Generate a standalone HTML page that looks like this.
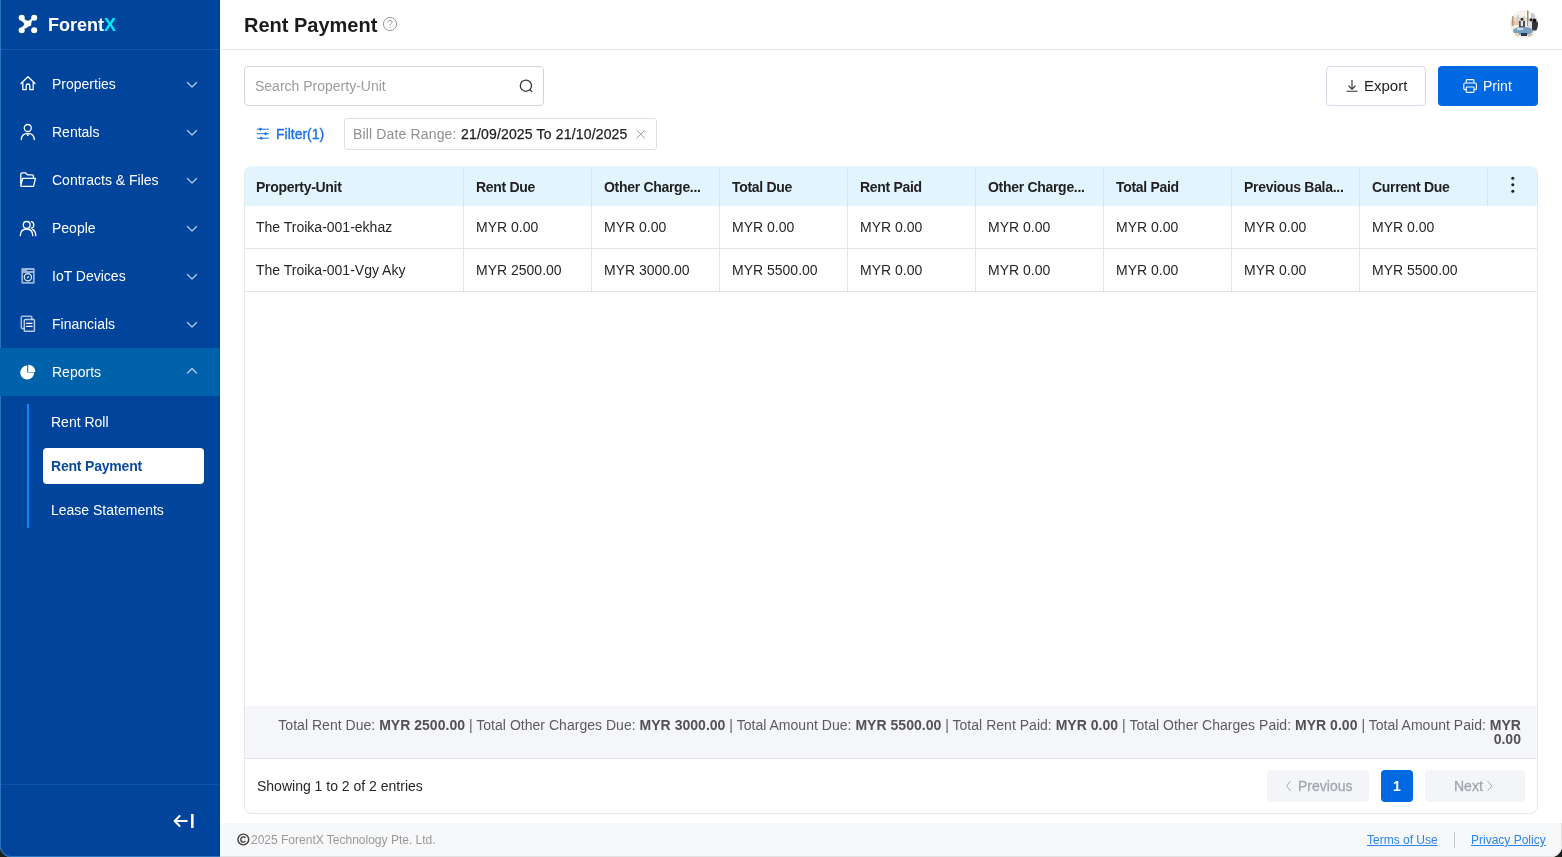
<!DOCTYPE html>
<html><head><meta charset="utf-8">
<style>
*{box-sizing:border-box;margin:0;padding:0}
html,body{width:1562px;height:857px;overflow:hidden;background:#18201a;font-family:"Liberation Sans",sans-serif}
#app{position:absolute;left:0;top:0;width:1562px;height:857px;background:#fff;border-radius:0 0 11px 11px;overflow:hidden}
.t{position:absolute;white-space:nowrap;font-size:14px;line-height:16px;will-change:transform}
#side{position:absolute;left:0;top:0;width:220px;height:857px;background:#00449c;color:#fff;overflow:hidden}
#side .lb{position:absolute;left:0;top:0;width:1px;height:857px;background:#2a74c0}
#side .bb{position:absolute;left:0;top:856px;width:220px;height:1px;background:#2a74c0}
#side .hline{position:absolute;left:0;top:49px;width:220px;height:1px;background:#0d5cae}
#side .bline{position:absolute;left:0;top:784px;width:220px;height:1px;background:#0a55a8}
#side .edge{position:absolute;left:219px;top:0;width:1px;height:857px;background:#003d94}
.logo{left:48px;top:16px;font-size:18px;line-height:18px;font-weight:bold;color:#fff}
.logo b{color:#00eaff}
.navt{left:52px;color:#fff}
.active{position:absolute;left:0;top:348px;width:220px;height:48px;background:#0061ab}
.sel{position:absolute;left:43px;top:448px;width:161px;height:36px;background:#fff;border-radius:4px}
.subline{position:absolute;left:27px;top:404px;width:2px;height:124px;background:#0a84ff}
#main{position:absolute;left:220px;top:0;width:1342px;height:857px}
.hdrline{position:absolute;left:220px;top:49px;width:1342px;height:1px;background:#e8e8e8}
.title{left:244px;top:15px;font-size:20px;line-height:20px;font-weight:bold;color:#1c1c1c}
.box{position:absolute}
.search{left:244px;top:66px;width:300px;height:40px;border:1px solid #d4d4d4;border-radius:4px}
.export{left:1326px;top:66px;width:100px;height:40px;border:1px solid #d6dce8;border-radius:4px}
.print{left:1438px;top:66px;width:100px;height:40px;background:#0069e2;border-radius:4px}
.chip{left:344px;top:118px;width:313px;height:32px;border:1px solid #e0e0e0;border-radius:3px}
.tbl{left:244px;top:166px;width:1294px;height:648px;border:1px solid #e9e9e9;border-top-color:#e2f4fd;border-radius:8px;overflow:hidden}
.thbg{position:absolute;left:0;top:0;width:1294px;height:39px;background:#e2f4fd}
.vl{position:absolute;width:1px;background:#e5e5e5}
.vlh{position:absolute;width:1px;background:#d6e6ee}
.hl{position:absolute;left:0;height:1px;width:1294px;background:#e5e5e5}
.totbg{position:absolute;left:0;top:539px;width:1294px;height:53px;background:#f5f6fa;border-bottom:1px solid #e6e6e6}
.totals{will-change:transform;letter-spacing:0.025px;position:absolute;left:0;top:551px;width:1292px;padding:0 16px 0 30px;text-align:right;font-size:14px;line-height:14px;color:#5c5c5c}
.totals b{color:#525252}
.th{font-weight:bold;color:#222;letter-spacing:-0.3px}
.td{color:#262626}
.pgbtn{position:absolute;top:770px;height:32px;border-radius:4px;background:#f4f5f9}
.one{position:absolute;left:1381px;top:770px;width:32px;height:32px;border-radius:4px;background:#0069e2}
.foot{position:absolute;left:220px;top:823px;width:1342px;height:34px;background:#f7f8fa;overflow:hidden}
.foot div{position:absolute;left:-40px;top:-40px;width:1382px;height:74px;border:1px solid #e2e2e2;border-radius:11px}
.ft{font-size:12px;line-height:14px}
a{color:#2a86e8;text-decoration:underline}
svg{position:absolute;left:0;top:0}
</style></head><body>
<div id="app">
<div id="side">
  <div class="hline"></div>
  <div class="bline"></div>
  <div class="edge"></div>
  <div style="position:absolute;left:0;top:-20px;width:260px;height:877px;border:1px solid #2a74c0;border-radius:11px"></div>
  <div class="active"></div>
  <div class="sel"></div>
  <div class="subline"></div>
</div>
<div class="t logo">Forent<b>X</b></div>
<div class="t navt" style="top:76px">Properties</div>
<div class="t navt" style="top:124px">Rentals</div>
<div class="t navt" style="top:172px">Contracts &amp; Files</div>
<div class="t navt" style="top:220px">People</div>
<div class="t navt" style="top:268px">IoT Devices</div>
<div class="t navt" style="top:316px">Financials</div>
<div class="t navt" style="top:364px">Reports</div>
<div class="t navt" style="left:51px;top:414px">Rent Roll</div>
<div class="t navt" style="left:51px;top:458px;color:#0b4a9c;font-weight:bold;letter-spacing:-0.2px">Rent Payment</div>
<div class="t navt" style="left:51px;top:502px">Lease Statements</div>

<div class="hdrline"></div>
<div class="t title">Rent Payment</div>
<div class="box search"></div>
<div class="t" style="left:255px;top:78px;color:#9b9b9b">Search Property-Unit</div>
<div class="box export"></div>
<div class="t" style="left:1364px;top:78px;color:#1f1f1f;font-size:15px">Export</div>
<div class="box print"></div>
<div class="t" style="left:1483px;top:78px;color:#fff;font-size:14px">Print</div>
<div class="t" style="left:276px;top:126px;color:#1670e6;-webkit-text-stroke:0.35px #1670e6">Filter(1)</div>
<div class="box chip"></div>
<div class="t" style="left:353px;top:126px;color:#8f8f8f;letter-spacing:0.15px">Bill Date Range:</div>
<div class="t" style="left:461px;top:126px;color:#222;letter-spacing:0.17px;-webkit-text-stroke:0.25px #222">21/09/2025 To 21/10/2025</div>

<div class="box tbl">
  <div class="thbg"></div>
  <div class="vlh" style="left:218px;top:0;height:39px"></div>
  <div class="vlh" style="left:346px;top:0;height:39px"></div>
  <div class="vlh" style="left:474px;top:0;height:39px"></div>
  <div class="vlh" style="left:602px;top:0;height:39px"></div>
  <div class="vlh" style="left:730px;top:0;height:39px"></div>
  <div class="vlh" style="left:858px;top:0;height:39px"></div>
  <div class="vlh" style="left:986px;top:0;height:39px"></div>
  <div class="vlh" style="left:1114px;top:0;height:39px"></div>
  <div class="vlh" style="left:1242px;top:0;height:39px"></div>
  <div class="vl" style="left:218px;top:39px;height:86px"></div>
  <div class="vl" style="left:346px;top:39px;height:86px"></div>
  <div class="vl" style="left:474px;top:39px;height:86px"></div>
  <div class="vl" style="left:602px;top:39px;height:86px"></div>
  <div class="vl" style="left:730px;top:39px;height:86px"></div>
  <div class="vl" style="left:858px;top:39px;height:86px"></div>
  <div class="vl" style="left:986px;top:39px;height:86px"></div>
  <div class="vl" style="left:1114px;top:39px;height:86px"></div>
  <div class="hl" style="top:81px"></div>
  <div class="hl" style="top:124px"></div>
  <div class="totbg"></div>
</div>
<div class="t th" style="left:256px;top:179px">Property-Unit</div>
<div class="t th" style="left:476px;top:179px">Rent Due</div>
<div class="t th" style="left:604px;top:179px">Other Charge...</div>
<div class="t th" style="left:732px;top:179px">Total Due</div>
<div class="t th" style="left:860px;top:179px">Rent Paid</div>
<div class="t th" style="left:988px;top:179px">Other Charge...</div>
<div class="t th" style="left:1116px;top:179px">Total Paid</div>
<div class="t th" style="left:1244px;top:179px">Previous Bala...</div>
<div class="t th" style="left:1372px;top:179px">Current Due</div>

<div class="t td" style="left:256px;top:219px">The Troika-001-ekhaz</div>
<div class="t td" style="left:476px;top:219px">MYR 0.00</div>
<div class="t td" style="left:604px;top:219px">MYR 0.00</div>
<div class="t td" style="left:732px;top:219px">MYR 0.00</div>
<div class="t td" style="left:860px;top:219px">MYR 0.00</div>
<div class="t td" style="left:988px;top:219px">MYR 0.00</div>
<div class="t td" style="left:1116px;top:219px">MYR 0.00</div>
<div class="t td" style="left:1244px;top:219px">MYR 0.00</div>
<div class="t td" style="left:1372px;top:219px">MYR 0.00</div>

<div class="t td" style="left:256px;top:262px">The Troika-001-Vgy Aky</div>
<div class="t td" style="left:476px;top:262px">MYR 2500.00</div>
<div class="t td" style="left:604px;top:262px">MYR 3000.00</div>
<div class="t td" style="left:732px;top:262px">MYR 5500.00</div>
<div class="t td" style="left:860px;top:262px">MYR 0.00</div>
<div class="t td" style="left:988px;top:262px">MYR 0.00</div>
<div class="t td" style="left:1116px;top:262px">MYR 0.00</div>
<div class="t td" style="left:1244px;top:262px">MYR 0.00</div>
<div class="t td" style="left:1372px;top:262px">MYR 5500.00</div>

<div class="totals" style="left:245px;top:718px">Total Rent Due: <b>MYR 2500.00</b> | Total Other Charges Due: <b>MYR 3000.00</b> | Total Amount Due: <b>MYR 5500.00</b> | Total Rent Paid: <b>MYR 0.00</b> | Total Other Charges Paid: <b>MYR 0.00</b> | Total Amount Paid: <b>MYR 0.00</b></div>

<div class="t td" style="left:257px;top:778px">Showing 1 to 2 of 2 entries</div>
<div class="pgbtn" style="left:1267px;width:102px"></div>
<div class="one"></div>
<div class="pgbtn" style="left:1425px;width:100px"></div>
<div class="t" style="left:1298px;top:778px;color:#a3a7ad;-webkit-text-stroke:0.3px #a3a7ad">Previous</div>
<div class="t" style="left:1393px;top:778px;color:#fff;font-weight:bold">1</div>
<div class="t" style="left:1454px;top:778px;color:#a3a7ad;-webkit-text-stroke:0.3px #a3a7ad">Next</div>

<div class="foot"><div></div></div>
<div class="t ft" style="left:251px;top:833px;color:#999">2025 ForentX Technology Pte. Ltd.</div>
<div class="t ft" style="left:1367px;top:833px"><a>Terms of Use</a></div>
<div class="t ft" style="left:1471px;top:833px"><a>Privacy Policy</a></div>
<div class="box" style="left:1454px;top:832px;width:1px;height:16px;background:#c8c8c8"></div>

<svg width="1562" height="857" viewBox="0 0 1562 857">
  <!-- logo -->
  <g fill="#fff"><circle cx="21.7" cy="17.7" r="3.05"/><circle cx="34.2" cy="17.7" r="3.05"/><circle cx="21.7" cy="30.2" r="3.05"/><circle cx="34.2" cy="30.2" r="3.05"/>
  <path d="M20.8 20.4 L24.4 19 Q27.8 22.5 31.3 18.7 L32.5 20.3 Q30.9 22.6 31.2 25.4 Q28 26.4 25.2 28.8 L21.4 27.3 Q27.2 23.8 20.8 20.4 Z"/></g>
  <g fill="none" stroke="#fff" stroke-width="1.3" stroke-linejoin="round" stroke-linecap="round">
    <!-- home -->
    <path d="M21 83.5 L28 76.8 L35 83.5 M22.8 82 V89.6 H26.2 V85.6 Q26.2 84 28 84 Q29.8 84 29.8 85.6 V89.6 H33.2 V82"/>
    <!-- person -->
    <circle cx="27.8" cy="128" r="3.5"/>
    <path d="M21.3 139.6 Q21.6 133.3 27.8 133.3 Q34 133.3 34.3 139.6 M26.3 133.6 L27.8 135.2 L29.3 133.6"/>
    <!-- folder -->
    <path d="M20.8 185.5 V174 Q20.8 172.8 22 172.8 H25.4 L27.4 174.8 H32.2 Q33.4 174.8 33.4 176 V178.2 M20.8 185.5 L22.6 178.4 H35.4 L33.7 185.7 Q33.5 186.4 32.8 186.4 H21.6 Q20.8 186.4 20.8 185.5"/>
    <!-- people -->
    <circle cx="26.7" cy="224.9" r="3.4"/>
    <path d="M20.3 235.7 Q20.5 229 26.7 229 Q32.5 229 32.8 235.7 M31.3 221.6 Q33.8 222.2 33.8 224.9 Q33.8 227.4 31.3 228.2 M32.6 229.4 Q35.6 231 35.8 235.7"/>
    <!-- financials -->
    <path d="M24.1 328.6 H22.3 Q21.3 328.6 21.3 327.6 V317.2 Q21.3 316.2 22.3 316.2 H30.8 Q31.8 316.2 31.8 317.2 V319.1" opacity="0.65" stroke-width="1.5"/>
    <rect x="24.3" y="319.4" width="10.1" height="11.9" rx="0.9" opacity="0.72" stroke-width="1.5"/>
    <path d="M26.6 323.3 H32 M26.6 326.4 H32"/>
  </g>
  <!-- iot -->
  <path fill-rule="evenodd" fill="#fff" fill-opacity="0.6" d="M21.3 269.3 Q21.3 268 22.6 268 H33.4 Q34.7 268 34.7 269.3 V282.5 Q34.7 283.8 33.4 283.8 H22.6 Q21.3 283.8 21.3 282.5 Z M27.1 270 H32.9 V271.1 H27.1 Z M23 273 H33 V281.9 H23 Z"/>
  <circle cx="27.9" cy="277.3" r="3.6" fill="none" stroke="#fff" stroke-width="1.2" opacity="0.9"/>
  <path d="M27.3 278 L28.6 276.6" stroke="#fff" stroke-width="1.1" stroke-linecap="round"/>
  <!-- pie -->
  <path d="M27.2 365.6 A7 7 0 1 0 34.2 372.6 H27.2 Z" fill="#fff"/>
  <path d="M28.2 364.7 A7.2 7.2 0 0 1 35.4 371.9 H28.2 Z" fill="#fff"/>
  <!-- chevrons -->
  <g fill="none" stroke="#b3c9ea" stroke-width="1.3" stroke-linecap="round" stroke-linejoin="round">
    <path d="M187.5 82.5 L192 87 L196.5 82.5"/>
    <path d="M187.5 130.5 L192 135 L196.5 130.5"/>
    <path d="M187.5 178.5 L192 183 L196.5 178.5"/>
    <path d="M187.5 226.5 L192 231 L196.5 226.5"/>
    <path d="M187.5 274.5 L192 279 L196.5 274.5"/>
    <path d="M187.5 322.5 L192 327 L196.5 322.5"/>
    <path d="M187.5 373 L192 368.5 L196.5 373"/>
  </g>
  <!-- collapse -->
  <path d="M186.8 821 H175 M179.6 816 L174.6 821 L179.6 826" fill="none" stroke="#fff" stroke-width="2" stroke-linecap="round" stroke-linejoin="round"/>
  <rect x="191" y="814" width="2.6" height="14" fill="#fff"/>
  <!-- help -->
  <circle cx="390" cy="24" r="6.6" fill="none" stroke="#9a9a9a" stroke-width="1"/>
  <path d="M388 22.3 Q388 20.4 390 20.4 Q392 20.4 392 22.2 Q392 23.4 390.6 24 Q390 24.4 390 25.6" fill="none" stroke="#9a9a9a" stroke-width="1"/>
  <circle cx="390" cy="27.4" r="0.6" fill="#9a9a9a"/>
  <!-- search icon -->
  <circle cx="525.9" cy="85.7" r="5.6" fill="none" stroke="#333" stroke-width="1.3"/>
  <path d="M529.9 89.7 L531.8 91.6" stroke="#333" stroke-width="1.3" stroke-linecap="round"/>
  <!-- export icon -->
  <path d="M1352 80 V89 M1348.4 85.6 L1352 89.2 L1355.6 85.6 M1346.6 91.3 H1357.6" fill="none" stroke="#333" stroke-width="1.1"/>
  <!-- print icon -->
  <g fill="none" stroke="#fff" stroke-width="1.1" stroke-linejoin="round">
    <path d="M1466.2 83 V80.6 Q1466.2 79.6 1467.2 79.6 H1473 Q1474 79.6 1474 80.6 V83"/>
    <path d="M1466 89.6 H1464.8 Q1463.8 89.6 1463.8 88.6 V84.6 Q1463.8 83 1465.4 83 H1474.8 Q1476.4 83 1476.4 84.6 V88.6 Q1476.4 89.6 1475.4 89.6 H1474.2"/>
    <rect x="1466.2" y="87" width="7.8" height="5.4" rx="0.8"/>
  </g>
  <!-- filter icon -->
  <g stroke="#1670e6" stroke-width="1" fill="#1670e6">
    <path d="M257 129.2 H269 M257 133.7 H269 M257 138.2 H269"/>
    <circle cx="260.4" cy="129.2" r="1"/>
    <circle cx="265.6" cy="133.7" r="1"/>
    <circle cx="261.2" cy="138.2" r="1"/>
  </g>
  <!-- chip x -->
  <path d="M636.6 130 L645 138.4 M645 130 L636.6 138.4" stroke="#9a9a9a" stroke-width="1"/>
  <!-- kebab -->
  <g fill="#1f1f1f"><circle cx="1512.8" cy="178.2" r="1.5"/><circle cx="1512.8" cy="184.8" r="1.5"/><circle cx="1512.8" cy="191.2" r="1.5"/></g>
  <!-- prev / next chevrons -->
  <path d="M1290.6 781 L1286.6 786 L1290.6 791" fill="none" stroke="#a8acb2" stroke-width="1"/>
  <path d="M1487.6 781 L1491.8 786 L1487.6 791" fill="none" stroke="#a8acb2" stroke-width="1"/>
  <!-- copyright -->
  <circle cx="243.3" cy="839.5" r="5.4" fill="none" stroke="#3c3c3c" stroke-width="1.4"/>
  <path d="M245.4 837.9 Q244.9 836.8 243.4 836.8 Q240.8 836.8 240.8 839.5 Q240.8 842.2 243.4 842.2 Q244.9 842.2 245.4 841.1" fill="none" stroke="#3c3c3c" stroke-width="1.3"/>
  <!-- avatar -->
  <defs><clipPath id="av"><circle cx="1524" cy="24" r="14"/></clipPath><filter id="bl" x="-10%" y="-10%" width="120%" height="120%"><feGaussianBlur stdDeviation="0.35"/></filter></defs>
  <g clip-path="url(#av)"><g filter="url(#bl)">
    <rect x="1508" y="8" width="32" height="32" fill="#f2ede2"/>
    <rect x="1508" y="8" width="32" height="10" fill="#f7f3ea"/>
    <rect x="1514" y="17" width="12" height="6" fill="#e2ddd2"/>
    <rect x="1517" y="15" width="2" height="6" fill="#d2d0cc"/>
    <rect x="1523" y="16" width="2" height="6" fill="#d8d8d8"/>
    <rect x="1531" y="13" width="4" height="9" fill="#c3cad3"/>
    <rect x="1511" y="21" width="8" height="4" fill="#e8c8b0"/>
    <rect x="1512" y="16" width="1.5" height="10" fill="#b89478"/>
    <rect x="1527" y="10" width="1.5" height="16" fill="#a28c7c"/>
    <rect x="1519" y="21" width="6" height="6" fill="#4a4650"/>
    <rect x="1520.8" y="21" width="2.2" height="5" fill="#e8e8ee"/>
    <circle cx="1522" cy="19.3" r="1.5" fill="#4a3024"/>
    <rect x="1528" y="22" width="4" height="7" fill="#e4e0de"/>
    <circle cx="1531" cy="19.8" r="1.6" fill="#2e2222"/>
    <rect x="1532" y="21.5" width="6" height="9" fill="#36363c"/>
    <circle cx="1534.5" cy="20.5" r="1.9" fill="#201818"/>
    <ellipse cx="1523" cy="31" rx="10" ry="4.2" fill="#7aa0c0"/>
    <rect x="1517" y="28" width="6" height="2" fill="#c8d8e6"/>
    <rect x="1521" y="33" width="6" height="3" fill="#2c3852"/>
    <rect x="1510" y="33" width="9" height="6" fill="#e8d2bc"/>
    <rect x="1528" y="34" width="10" height="5" fill="#dcc4ac"/>
  </g></g>
</svg>
</div>
</body></html>
